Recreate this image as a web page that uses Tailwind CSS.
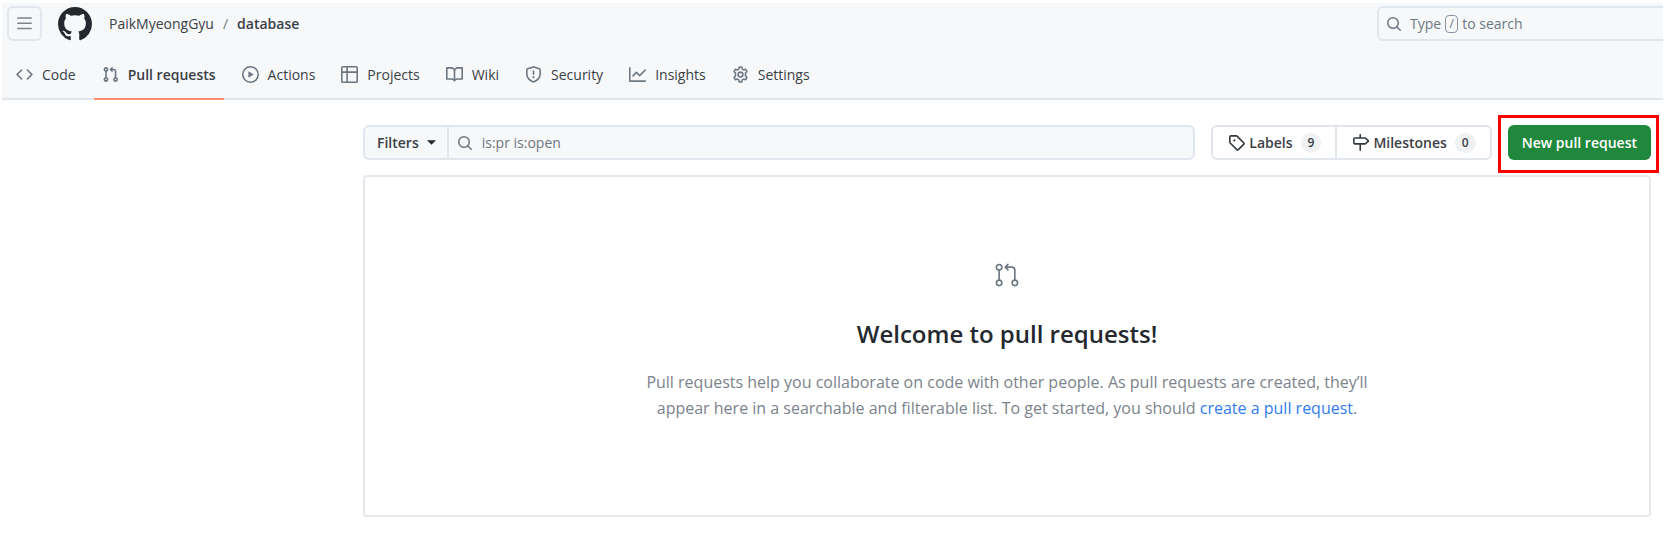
<!DOCTYPE html>
<html lang="en">
<head>
<meta charset="utf-8">
<meta name="viewport" content="width=device-width, initial-scale=1">
<title>Pull requests · PaikMyeongGyu/database</title>
<script src="https://cdn.jsdelivr.net/npm/@tailwindcss/browser@4"></script>
</head>
<body class="bg-white font-['Open_Sans','Noto_Sans',sans-serif] text-sm text-[#3b4046]">
<svg class="hidden">
  <symbol id="pr" viewBox="0 0 16 16"><path d="M1.5 3.25a2.25 2.25 0 1 1 3 2.122v5.256a2.251 2.251 0 1 1-1.5 0V5.372A2.25 2.25 0 0 1 1.5 3.25Zm5.677-.177L9.573.677A.25.25 0 0 1 10 .854V2.5h1A2.5 2.5 0 0 1 13.5 5v5.628a2.251 2.251 0 1 1-1.5 0V5a1 1 0 0 0-1-1h-1v1.646a.25.25 0 0 1-.427.177L7.177 3.427a.25.25 0 0 1 0-.354ZM3.75 2.5a.75.75 0 1 0 0 1.5.75.75 0 0 0 0-1.5Zm0 9.5a.75.75 0 1 0 0 1.5.75.75 0 0 0 0-1.5Zm8.25.75a.75.75 0 1 0 1.5 0 .75.75 0 0 0-1.5 0Z"/></symbol>
  <symbol id="search" viewBox="0 0 16 16"><path d="M10.68 11.74a6 6 0 0 1-7.922-8.982 6 6 0 0 1 8.982 7.922l3.04 3.04a.749.749 0 0 1-.326 1.275.749.749 0 0 1-.734-.215ZM11.5 7a4.499 4.499 0 1 0-8.997 0A4.499 4.499 0 0 0 11.5 7Z"/></symbol>
</svg>

<header class="mx-[2px] mt-[3px] border-b-2 border-[#e1e5ec] bg-[#f6f8fa]">
  <div class="flex items-center pt-[3px] pl-[5px]">
    <button type="button" aria-label="Open menu" class="flex size-[35px] items-center justify-center rounded-md border-2 border-[#e3e7ed]">
      <svg class="size-[17px] fill-[#7b838c]" viewBox="0 0 16 16"><path d="M1 2.75A.75.75 0 0 1 1.75 2h12.5a.75.75 0 0 1 0 1.5H1.75A.75.75 0 0 1 1 2.75Zm0 5A.75.75 0 0 1 1.75 7h12.5a.75.75 0 0 1 0 1.5H1.75A.75.75 0 0 1 1 7.75ZM1.75 12h12.5a.75.75 0 0 1 0 1.5H1.75a.75.75 0 0 1 0-1.5Z"/></svg>
    </button>
    <a href="#" aria-label="GitHub" class="ml-4">
      <svg class="size-[34px] fill-[#24292f]" viewBox="0 0 16 16"><path d="M8 0c4.42 0 8 3.58 8 8a8.013 8.013 0 0 1-5.45 7.59c-.4.08-.55-.17-.55-.38 0-.27.01-1.13.01-2.2 0-.75-.25-1.23-.54-1.48 1.78-.2 3.65-.88 3.65-3.95 0-.88-.31-1.59-.82-2.15.08-.2.36-1.02-.08-2.12 0 0-.67-.22-2.2.82-.64-.18-1.32-.27-2-.27-.68 0-1.36.09-2 .27-1.53-1.03-2.2-.82-2.2-.82-.44 1.1-.16 1.92-.08 2.12-.51.56-.82 1.28-.82 2.15 0 3.06 1.86 3.75 3.64 3.95-.23.2-.44.55-.51 1.07-.46.21-1.61.55-2.33-.66-.15-.24-.6-.83-1.23-.82-.67.01-.27.38.01.53.34.19.73.9.82 1.13.16.45.68 1.31 2.69.94 0 .67.01 1.3.01 1.49 0 .21-.15.45-.55.38A7.995 7.995 0 0 1 0 8c0-4.42 3.58-8 8-8Z"/></svg>
    </a>
    <nav aria-label="Breadcrumb" class="ml-[17px] flex">
      <a href="#">PaikMyeongGyu</a><span class="mx-[9px] text-[#6e7781]">/</span><a href="#" class="font-semibold">database</a>
    </nav>
    <label class="ml-auto flex h-[35px] w-[286px] items-center rounded-l-md border-2 border-r-0 border-[#e1e5ec] pl-[7px] text-[#6e7781]">
      <svg class="size-4 fill-[#6e7781]" viewBox="0 0 16 16"><use href="#search"/></svg>
      <span class="ml-2 flex items-center gap-1">Type <kbd class="flex h-[18px] w-[13px] items-center justify-center rounded-sm border border-[#8c959f] font-[inherit] text-xs">/</kbd> to search</span>
      <input type="search" aria-label="Search" class="min-w-0 flex-1 outline-none">
    </label>
  </div>
  <nav aria-label="Repository" class="mt-3 -mb-[2px] flex h-[47px] gap-[10px] pl-[6px]">
    <a href="#" class="flex items-center gap-[9px] px-2 pb-1"><svg class="size-[17px] fill-[#6e7781]" viewBox="0 0 16 16"><path d="m11.28 3.22 4.25 4.25a.75.75 0 0 1 0 1.06l-4.25 4.25a.749.749 0 0 1-1.275-.326.749.749 0 0 1 .215-.734L13.94 8l-3.72-3.72a.749.749 0 0 1 .326-1.275.749.749 0 0 1 .734.215Zm-6.56 0a.751.751 0 0 1 1.042.018.751.751 0 0 1 .018 1.042L2.06 8l3.72 3.72a.749.749 0 0 1-.326 1.275.749.749 0 0 1-.734-.215L.47 8.53a.75.75 0 0 1 0-1.06Z"/></svg>Code</a>
    <a href="#" aria-current="page" class="flex items-center gap-[9px] border-b-2 border-[#fd8c73] px-2 pb-[2px] font-semibold"><svg class="size-[17px] fill-[#6e7781]" viewBox="0 0 16 16"><use href="#pr"/></svg>Pull requests</a>
    <a href="#" class="flex items-center gap-[9px] px-2 pb-1"><svg class="size-[17px] fill-[#6e7781]" viewBox="0 0 16 16"><path d="M8 0a8 8 0 1 1 0 16A8 8 0 0 1 8 0ZM1.5 8a6.5 6.5 0 1 0 13 0 6.5 6.5 0 0 0-13 0Zm4.879-2.773 4.264 2.559a.25.25 0 0 1 0 .428l-4.264 2.559A.25.25 0 0 1 6 10.559V5.442a.25.25 0 0 1 .379-.215Z"/></svg>Actions</a>
    <a href="#" class="flex items-center gap-[9px] px-2 pb-1"><svg class="size-[17px] fill-[#6e7781]" viewBox="0 0 16 16"><path d="M0 1.75C0 .784.784 0 1.75 0h12.5C15.216 0 16 .784 16 1.75v12.5A1.75 1.75 0 0 1 14.25 16H1.75A1.75 1.75 0 0 1 0 14.25ZM6.5 6.5v8h7.75a.25.25 0 0 0 .25-.25V6.5Zm8-1.5V1.75a.25.25 0 0 0-.25-.25H6.5V5Zm-13 1.5v7.75c0 .138.112.25.25.25H5v-8ZM5 5V1.5H1.75a.25.25 0 0 0-.25.25V5Z"/></svg>Projects</a>
    <a href="#" class="flex items-center gap-[9px] px-2 pb-1"><svg class="size-[17px] fill-[#6e7781]" viewBox="0 0 16 16"><path d="M0 1.75A.75.75 0 0 1 .75 1h4.253c1.227 0 2.317.59 3 1.501A3.743 3.743 0 0 1 11.006 1h4.245a.75.75 0 0 1 .75.75v10.5a.75.75 0 0 1-.75.75h-4.507a2.25 2.25 0 0 0-1.591.659l-.622.621a.75.75 0 0 1-1.06 0l-.622-.621A2.25 2.25 0 0 0 5.258 13H.75a.75.75 0 0 1-.75-.75Zm7.251 10.324.004-5.073-.002-2.253A2.25 2.25 0 0 0 5.003 2.5H1.5v9h3.757a3.75 3.75 0 0 1 1.994.574ZM8.755 4.75l-.004 7.322a3.752 3.752 0 0 1 1.992-.572H14.5v-9h-3.495a2.25 2.25 0 0 0-2.25 2.25Z"/></svg>Wiki</a>
    <a href="#" class="flex items-center gap-[9px] px-2 pb-1"><svg class="size-[17px] fill-[#6e7781]" viewBox="0 0 16 16"><path d="M7.467.133a1.748 1.748 0 0 1 1.066 0l5.25 1.68A1.75 1.75 0 0 1 15 3.48V7c0 1.566-.32 3.182-1.303 4.682-.983 1.498-2.585 2.813-5.032 3.855a1.697 1.697 0 0 1-1.33 0c-2.447-1.042-4.049-2.357-5.032-3.855C1.32 10.182 1 8.566 1 7V3.48a1.75 1.75 0 0 1 1.217-1.667Zm.61 1.429a.25.25 0 0 0-.153 0l-5.25 1.68a.25.25 0 0 0-.174.238V7c0 1.358.275 2.666 1.057 3.86.784 1.194 2.121 2.34 4.366 3.297a.196.196 0 0 0 .154 0c2.245-.956 3.582-2.104 4.366-3.298C13.225 9.666 13.5 8.36 13.5 7V3.48a.251.251 0 0 0-.174-.237l-5.25-1.68ZM8.75 4.75v3a.75.75 0 0 1-1.5 0v-3a.75.75 0 0 1 1.5 0ZM9 10.5a1 1 0 1 1-2 0 1 1 0 0 1 2 0Z"/></svg>Security</a>
    <a href="#" class="flex items-center gap-[9px] px-2 pb-1"><svg class="size-[17px] fill-[#6e7781]" viewBox="0 0 16 16"><path d="M1.5 1.75V13.5h13.75a.75.75 0 0 1 0 1.5H.75a.75.75 0 0 1-.75-.75V1.75a.75.75 0 0 1 1.5 0Zm14.28 2.53-5.25 5.25a.75.75 0 0 1-1.06 0L7 7.06 4.28 9.78a.751.751 0 0 1-1.042-.018.751.751 0 0 1-.018-1.042l3.25-3.25a.75.75 0 0 1 1.06 0L10 7.94l4.72-4.72a.751.751 0 0 1 1.042.018.751.751 0 0 1 .018 1.042Z"/></svg>Insights</a>
    <a href="#" class="flex items-center gap-[9px] px-2 pb-1"><svg class="size-[17px] fill-none stroke-[#6e7781]" viewBox="0 0 16 16" stroke-width="1.5" stroke-linejoin="round"><path d="M6.9 1h2.2l.5 1.9 1.4.8 1.9-.6 1.2 2.1-1.400 1.400v2.800l1.400 1.400-1.200 2.100-1.900-.6-1.400.8L9.100 15H6.900l-.5-1.900-1.400-.8-1.900.6-1.200-2.100 1.400-1.400V6.600L1.900 5.200l1.200-2.100 1.900.6 1.400-.8Z"/><circle cx="8" cy="8" r="2.250"/></svg>Settings</a>
  </nav>
</header>

<main class="pt-[25px] pr-[14px] pl-[363px]">
  <div class="flex h-[35px]">
    <form class="flex flex-1 rounded-md border-2 border-[#e1e5ec] bg-[#f6f8fa]">
      <button type="button" class="flex items-center gap-2 border-r-2 border-[#e1e5ec] px-3 pr-[11px] font-semibold">Filters
        <svg class="h-[5px] w-[9px] fill-[#24292f]" viewBox="0 0 8 4"><path d="M0 0h8L4 4Z"/></svg>
      </button>
      <label class="flex flex-1 items-center gap-[9px] pl-2">
        <svg class="size-4 fill-[#6e7781]" viewBox="0 0 16 16"><use href="#search"/></svg>
        <input type="text" aria-label="Search pull requests" value="is:pr is:open" class="min-w-0 flex-1 text-[#6e7781] outline-none">
      </label>
    </form>
    <div class="ml-4 flex rounded-md border-2 border-[#e1e5ec] font-semibold">
      <a href="#" class="flex items-center gap-1 border-r-2 border-[#e1e5ec] pr-[14px] pl-[15px]"><svg class="size-[17px] fill-[#33383d]" viewBox="0 0 16 16"><path d="M1 7.775V2.750C1 1.784 1.784 1 2.750 1h5.025c.464 0 .910.184 1.238.513l6.250 6.250a1.750 1.750 0 0 1 0 2.474l-5.026 5.026a1.750 1.750 0 0 1-2.474 0l-6.250-6.250A1.752 1.752 0 0 1 1 7.775Zm1.500 0c0 .066.026.130.073.177l6.250 6.250a.250.250 0 0 0 .354 0l5.025-5.025a.250.250 0 0 0 0-.354l-6.250-6.250a.250.250 0 0 0-.177-.073H2.750a.250.250 0 0 0-.250.250ZM6 5a1 1 0 1 1 0 2 1 1 0 0 1 0-2Z"/></svg>Labels<span class="ml-1 rounded-full bg-[#eff1f3] px-[7px] text-xs leading-5">9</span></a>
      <a href="#" class="flex items-center gap-1 pr-[14px] pl-[15px]"><svg class="size-[17px] fill-[#33383d]" viewBox="0 0 16 16"><path d="M7.750 0a.750.750 0 0 1 .750.750V3h3.634c.414 0 .814.147 1.130.414l2.070 1.750a1.750 1.750 0 0 1 0 2.672l-2.070 1.750a1.750 1.750 0 0 1-1.130.414H8.500v5.250a.750.750 0 0 1-1.500 0V10H2.750A1.750 1.750 0 0 1 1 8.250v-3.500C1 3.784 1.784 3 2.750 3H7V.750A.750.750 0 0 1 7.750 0Zm4.384 8.500a.250.250 0 0 0 .161-.060l2.070-1.750a.248.248 0 0 0 0-.380l-2.070-1.750a.250.250 0 0 0-.161-.060H2.750a.250.250 0 0 0-.250.250v3.500c0 .138.112.250.250.250h9.384Z"/></svg>Milestones<span class="ml-1 rounded-full bg-[#eff1f3] px-[7px] text-xs leading-5">0</span></a>
    </div>
    <div class="relative ml-4 flex">
      <button type="button" class="rounded-md bg-[#1f883d] px-[14px] font-semibold text-white">New pull request</button>
      <div class="pointer-events-none absolute -top-[10px] -right-2 -bottom-[13px] -left-[10px] border-3 border-[#ff0000]"></div>
    </div>
  </div>

  <section class="mt-[15px] flex min-h-[342px] flex-col items-center rounded-[4px] border-2 border-[#e5e9ee] pt-[85px] text-center">
    <svg class="size-[26px] fill-[#6e7781]" viewBox="0 0 24 24"><path d="M16 19.250a3.250 3.250 0 1 1 6.500 0 3.250 3.250 0 0 1-6.500 0Zm-14.500 0a3.250 3.250 0 1 1 6.500 0 3.250 3.250 0 0 1-6.500 0Zm0-14.500a3.250 3.250 0 1 1 6.500 0 3.250 3.250 0 0 1-6.500 0ZM4.750 3a1.750 1.750 0 1 0 .001 3.501A1.750 1.750 0 0 0 4.750 3Zm0 14.500a1.750 1.750 0 1 0 .001 3.501A1.750 1.750 0 0 0 4.750 17.500Zm14.500 0a1.750 1.750 0 1 0 .001 3.501 1.750 1.750 0 0 0-.001-3.501Z"/><path d="M13.405 1.720a.750.750 0 0 1 0 1.060L12.185 4h4.065A3.750 3.750 0 0 1 20 7.750v8.750a.750.750 0 0 1-1.500 0V7.750a2.250 2.250 0 0 0-2.250-2.250h-4.064l1.220 1.220a.750.750 0 0 1-1.061 1.060l-2.500-2.500a.750.750 0 0 1 0-1.060l2.500-2.500a.750.750 0 0 1 1.060 0ZM4.750 7.250A.750.750 0 0 1 5.500 8v8A.750.750 0 0 1 4 16V8a.750.750 0 0 1 .750-.750Z"/></svg>
    <h1 class="mt-7 text-2xl leading-9 font-semibold text-[#24292f]">Welcome to pull requests!</h1>
    <p class="mt-[17px] max-w-[740px] text-base leading-[26px] text-[#7b838c]">Pull requests help you collaborate on code with other people. As pull requests are created, they’ll appear here in a searchable and filterable list. To get started, you should <a href="#" class="text-[#2f7cf0]">create a pull request</a>.</p>
  </section>
</main>
</body>
</html>
